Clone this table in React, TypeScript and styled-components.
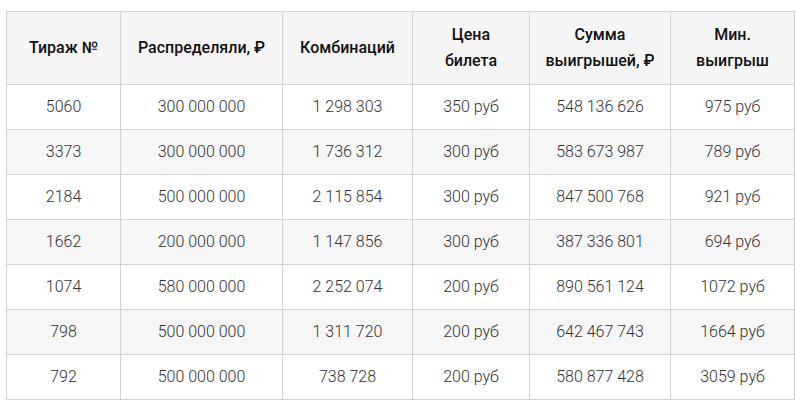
import React from "react";
import styled, { createGlobalStyle } from "styled-components";

const Global = createGlobalStyle`
  html, body { margin: 0; padding: 0; background: #fff; }
  body { font-family: Roboto, "Noto Sans", Arial, sans-serif; }
`;

const Page = styled.div`
  padding: 11px 0 0 6px;
`;

const Table = styled.table`
  border-collapse: collapse;
  width: 788px;
  table-layout: fixed;
`;

const Th = styled.th`
  background: #f5f5f5;
  border: 1px solid #d2d2d2;
  color: #111;
  font-weight: 500;
  font-size: 16px;
  line-height: 26px;
  padding: 10px 6px;
  text-align: center;
  vertical-align: middle;
`;

const Row = styled.tr<{ $shade: boolean }>`
  background: ${(p) => (p.$shade ? "#f6f6f6" : "#fff")};
`;

const Td = styled.td`
  border: 1px solid #d2d2d2;
  color: #333;
  font-weight: 300;
  font-size: 16px;
  line-height: 24px;
  padding: 10px 6px;
  text-align: center;
  vertical-align: middle;
`;

const widths = [114, 162, 130, 117, 141, 124];

const headers: React.ReactNode[] = [
  "Тираж №",
  "Распределяли, ₽",
  "Комбинаций",
  <>Цена<br />билета</>,
  <>Сумма<br />выигрышей, ₽</>,
  <>Мин.<br />выигрыш</>,
];

const rows = [
  ["5060", "300 000 000", "1 298 303", "350 руб", "548 136 626", "975 руб"],
  ["3373", "300 000 000", "1 736 312", "300 руб", "583 673 987", "789 руб"],
  ["2184", "500 000 000", "2 115 854", "300 руб", "847 500 768", "921 руб"],
  ["1662", "200 000 000", "1 147 856", "300 руб", "387 336 801", "694 руб"],
  ["1074", "580 000 000", "2 252 074", "200 руб", "890 561 124", "1072 руб"],
  ["798", "500 000 000", "1 311 720", "200 руб", "642 467 743", "1664 руб"],
  ["792", "500 000 000", "738 728", "200 руб", "580 877 428", "3059 руб"],
];

export default function App() {
  return (
    <Page>
      <Global />
      <Table>
        <colgroup>
          {widths.map((w, i) => (
            <col key={i} style={{ width: w }} />
          ))}
        </colgroup>
        <thead>
          <tr>
            {headers.map((h, i) => (
              <Th key={i}>{h}</Th>
            ))}
          </tr>
        </thead>
        <tbody>
          {rows.map((r, i) => (
            <Row key={i} $shade={i % 2 === 1}>
              {r.map((c, j) => (
                <Td key={j}>{c}</Td>
              ))}
            </Row>
          ))}
        </tbody>
      </Table>
    </Page>
  );
}
